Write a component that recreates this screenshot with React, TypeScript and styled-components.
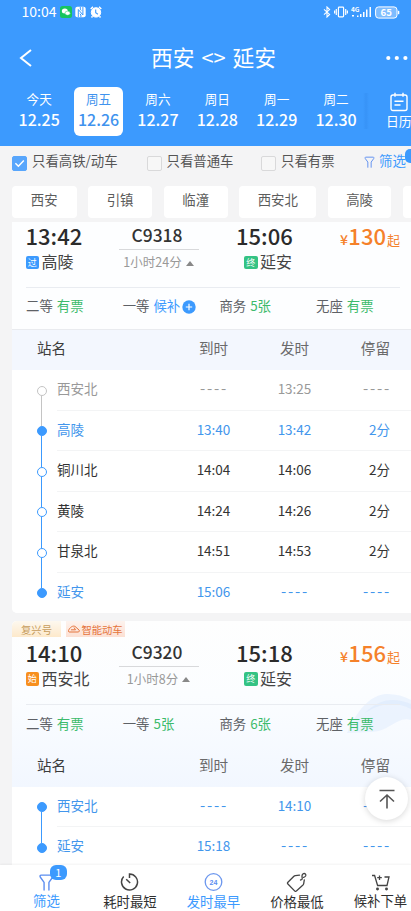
import React from 'react';
import styled, { createGlobalStyle, css } from 'styled-components';

const BLUE = '#3c9afe';
const GREEN = '#3dbb6c';

const Global = createGlobalStyle`
  * { box-sizing: border-box; }
  body { margin: 0; font-family: "Noto Sans CJK SC", sans-serif; }
`;

const Screen = styled.div`
  width: 411px;
  height: 911px;
  overflow: hidden;
  display: flex;
  flex-direction: column;
  background: #f4f4f5;
  white-space: nowrap;
  color: #333;
`;

/* ---------- header ---------- */
const Header = styled.header`
  height: 146px;
  flex: none;
  background: ${BLUE};
  color: #fff;
`;
const StatusBar = styled.div`
  height: 24px;
  padding: 0 11px 0 21.5px;
  display: flex;
  align-items: center;
  gap: 3.5px;
`;
const Clock = styled.span`
  font-size: 14px;
  line-height: 22px;
  margin-top: -2px;
`;
const StatusRight = styled.div`
  margin-left: auto;
  display: flex;
  align-items: center;
  gap: 3px;
`;
const TitleBar = styled.div`
  height: 62px;
  padding: 5px 3px 0 19px;
  display: flex;
  align-items: center;
  justify-content: space-between;
`;
const Title = styled.h1`
  margin: -2px 0 0;
  font-size: 21.8px;
  font-weight: 400;
  line-height: 32px;
  padding-left: 8px;
  word-spacing: 2px;
`;
const DateStrip = styled.div`
  display: flex;
  height: 50px;
  padding: 1px 0 0 9.5px;
`;
const DayCell = styled.div<{ $on?: boolean }>`
  width: 48.6px;
  margin: 0 5.4px;
  height: 49px;
  border-radius: 6px;
  text-align: center;
  flex: none;
  ${p => p.$on && css`background: #fff; color: #3f93ee;`}
`;
const DayName = styled.div`
  font-size: 12.6px;
  line-height: 18px;
  padding-top: 3px;
`;
const DayDate = styled.div`
  font-size: 16px;
  font-weight: 500;
  line-height: 20px;
  margin: 1px -4px 0;
`;
const StripEdge = styled.div`
  width: 6px;
  height: 36px;
  margin: 6px 16px 0 -3px;
  flex: none;
  background: linear-gradient(90deg, rgba(30, 110, 210, 0), rgba(30, 110, 210, 0.16), rgba(30, 110, 210, 0));
`;
const Calendar = styled.div`
  width: 28px;
  flex: none;
  display: flex;
  flex-direction: column;
  align-items: center;
  padding-top: 5px;
  font-size: 12.8px;
  line-height: 17px;
`;

/* ---------- filters ---------- */
const FilterRow = styled.div`
  display: flex;
  height: 40px;
  flex: none;
  padding: 4px 0 0 12px;
  font-size: 13.4px;
  line-height: 20px;
  color: #555;
`;
const Check = styled.label<{ $w: number }>`
  display: flex;
  width: ${p => p.$w}px;
  gap: 5px;
  flex: none;
`;
const Box = styled.span<{ $on?: boolean }>`
  width: 15px;
  height: 15px;
  margin-top: 6px;
  border-radius: 2px;
  display: flex;
  border: 1px solid ${p => (p.$on ? '#58a6fc' : '#d9d9da')};
  background: ${p => (p.$on ? '#58a6fc' : '#f7f7f7')};
`;
const FilterLink = styled.div`
  display: flex;
  color: ${BLUE};
  gap: 3px;
  padding-left: 1px;
  flex: none;
  & > svg { margin-top: 5px; }
`;
const CornerBadge = styled.span`
  width: 16px;
  height: 14px;
  margin: -1px 0 0 -4px;
  border-radius: 5px;
  background: ${BLUE};
`;
const ChipRow = styled.div`
  display: flex;
  height: 36px;
  flex: none;
  padding-left: 12px;
  gap: 11.6px;
`;
const Chip = styled.div<{ $w: number }>`
  width: ${p => p.$w}px;
  height: 32px;
  flex: none;
  border-radius: 4px;
  background: #fff;
  color: #5c5c5c;
  font-size: 13.4px;
  line-height: 26px;
  text-align: center;
`;

/* ---------- train cards ---------- */
const Card = styled.section<{ $tagged?: boolean }>`
  margin: 0 0 8px 12px;
  flex: none;
  background: ${p => (p.$tagged ? '#fff' : '#fdfeff')};
  border-radius: ${p => (p.$tagged ? '5px 0 0 0' : '0 0 0 5px')};
  overflow: hidden;
`;
const CardTop = styled.div<{ $tagged?: boolean }>`
  position: relative;
  isolation: isolate;
  ${p => p.$tagged
    ? css`background: linear-gradient(180deg, #fefefe 0%, #fbfdff 45%, #f2f7ff 100%);`
    : css`border-bottom: 1px solid #e9ebef; height: 108px;`}
`;
const Tags = styled.div`
  display: flex;
  height: 16px;
  gap: 5px;
  font-size: 10.3px;
  line-height: 15px;
`;
const Tag = styled.span<{ $kind: 'gold' | 'red' }>`
  display: flex;
  justify-content: center;
  align-items: center;
  gap: 1px;
  height: 16px;
  width: ${p => (p.$kind === 'gold' ? 49 : 59)}px;
  color: ${p => (p.$kind === 'gold' ? '#c69c5c' : '#e5743c')};
  background: ${p => (p.$kind === 'gold'
    ? 'linear-gradient(180deg, #fdf8ef, #fde9cb)'
    : 'linear-gradient(180deg, #fdf3ee, #fce0d3)')};
`;
const Summary = styled.div<{ $tagged?: boolean }>`
  display: grid;
  grid-template-columns: 80px 107px 99px 1fr;
  height: ${p => (p.$tagged ? 67.5 : 66)}px;
  padding-top: ${p => (p.$tagged ? 1.5 : 0)}px;
  margin: 0 11px 0 13.5px;
  border-bottom: 1px solid #e9ecf1;
`;
const Col = styled.div<{ $x?: number }>`
  padding-left: ${p => p.$x || 0}px;
`;
const BigTime = styled.div`
  height: 28px;
  font-size: 22px;
  font-weight: 500;
  line-height: 26px;
  color: #2b2b2b;
`;
const Station = styled.div<{ $shift?: number }>`
  display: flex;
  align-items: center;
  gap: 2.5px;
  height: 23px;
  margin-left: ${p => p.$shift || 0}px;
  font-size: 16px;
  line-height: 23px;
  color: #444;
`;
const StopBadge = styled.span<{ $bg: string }>`
  width: 13.5px;
  height: 13.5px;
  margin-top: 2px;
  border-radius: 2px;
  background: ${p => p.$bg};
  color: #fff;
  font-size: 9px;
  line-height: 13px;
  text-align: center;
`;
const TrainCol = styled.div`
  width: 80px;
  margin-left: 13px;
  text-align: center;
`;
const TrainNo = styled.div`
  height: 28px;
  border-bottom: 1px solid #d8d9db;
  font-size: 17.4px;
  font-weight: 500;
  line-height: 25px;
  padding-right: 3px;
  color: #333;
`;
const Duration = styled.div`
  display: flex;
  justify-content: center;
  align-items: center;
  gap: 4px;
  font-size: 12.5px;
  line-height: 24px;
  color: #999;
`;
const Triangle = styled.i`
  border: 4px solid transparent;
  border-top: 0;
  border-bottom: 5px solid #888;
  margin-top: 2px;
`;
const Price = styled.div`
  display: flex;
  justify-content: flex-end;
  align-items: baseline;
  color: #f5812a;
  font-size: 22px;
  font-weight: 500;
  line-height: 26px;
  height: 28px;
  small { font-size: 14px; margin-right: 0.5px; }
  em { font-size: 13px; font-style: normal; font-weight: 400; margin-left: 1px; }
`;
const Seats = styled.div<{ $tagged?: boolean }>`
  display: grid;
  grid-template-columns: repeat(4, 96.7px);
  height: ${p => (p.$tagged ? 42 : 41)}px;
  padding-left: 14px;
  font-size: 13.4px;
  line-height: ${p => (p.$tagged ? 36 : 35)}px;
  align-items: start;
  color: #5e6166;
`;
const Seat = styled.div<{ $c: string }>`
  display: flex;
  align-items: center;
  b { font-weight: 400; margin-left: 4px; color: ${p => p.$c}; }
`;
const Plus = styled.svg`
  margin: 3px 0 0 2px;
`;
const TableHead = styled.div<{ $plain?: boolean }>`
  display: grid;
  grid-template-columns: 161px 81px 81px 55px;
  height: 40px;
  background: ${p => (p.$plain ? 'transparent' : '#f3f7fe')};
  color: #6a6a6a;
  font-size: 14.6px;
  line-height: 36px;
  text-align: center;
  & > :first-child { text-align: left; padding-left: 25px; color: #3c3c3c; }
  & > :last-child { text-align: right; }
`;
type Tone = 'gray' | 'blue' | 'dark';
const tones: Record<Tone, string> = { gray: '#999', blue: '#4296ec', dark: '#333' };
const StopRow = styled.div<{ $tone: Tone }>`
  display: grid;
  grid-template-columns: 45px 1fr;
  height: 40.5px;
  background: #fff;
  color: ${p => tones[p.$tone]};
  font-size: 13.5px;
  line-height: 36px;
`;
const StopCells = styled.div<{ $last?: boolean }>`
  display: grid;
  grid-template-columns: 116px 81px 81px 55px;
  border-bottom: 1px solid ${p => (p.$last ? 'transparent' : '#f3f4f5')};
  text-align: center;
  & > :first-child { text-align: left; }
  & > :last-child { text-align: right; }
`;
const Dashes = styled.span`
  font-size: 15px;
  letter-spacing: 1.8px;
  margin-right: -1px;
`;
const Rail = styled.div`
  display: flex;
  flex-direction: column;
  align-items: center;
  width: 59px;
`;
const RailLine = styled.i<{ $h?: number; $c: string }>`
  width: 1.3px;
  background: ${p => p.$c};
  ${p => (p.$h ? css`height: ${p.$h}px;` : css`flex: 1;`)}
`;
const Dot = styled.i<{ $c: string; $fill?: boolean }>`
  width: 10px;
  height: 10px;
  flex: none;
  border-radius: 50%;
  border: 1.4px solid ${p => p.$c};
  background: ${p => (p.$fill ? p.$c : '#fff')};
`;
const Watermark = styled.svg`
  position: absolute;
  right: 0;
  top: 68px;
  z-index: -1;
`;

/* ---------- bottom ---------- */
const Results = styled.main`
  flex: 1;
  min-height: 0;
  overflow: hidden;
`;
const ToTop = styled.button`
  position: absolute;
  left: 365px;
  top: 777px;
  width: 43px;
  height: 43px;
  padding: 0;
  border: 0;
  border-radius: 50%;
  background: #fff;
  box-shadow: 0 1px 6px rgba(0, 0, 0, 0.16);
  display: flex;
  align-items: center;
  justify-content: center;
`;
const TabBar = styled.nav`
  height: 46px;
  flex: none;
  display: flex;
  padding-left: 4.7px;
  background: #fff;
  box-shadow: 0 -1px 2px rgba(0, 0, 0, 0.05);
`;
const Tab = styled.div<{ $on?: boolean; $up?: number }>`
  position: relative;
  flex: none;
  width: 83.5px;
  height: 46px;
  padding-top: 7px;
  display: flex;
  flex-direction: column;
  align-items: center;
  font-size: 13.4px;
  color: ${p => (p.$on ? BLUE : '#2f2f2f')};
  & > svg { flex: none; }
  & > span { line-height: 18px; margin-top: ${p => -(p.$up || 0)}px; }
`;
const Count = styled.b`
  position: absolute;
  left: 45px;
  top: 0;
  width: 17px;
  height: 15px;
  border-radius: 6px;
  background: ${BLUE};
  color: #fff;
  font-size: 11px;
  font-weight: 400;
  line-height: 14px;
  text-align: center;
`;

const Funnel = ({ s }: { s: number }) => (
  <svg width={s} height={s} viewBox="0 0 18 18" fill="none" stroke="#5b8df0" strokeWidth="1.3" strokeLinecap="round" strokeLinejoin="round">
    <path d="M6.700 17V9.800L3.200 5C2.500 3.900 2.800 3 4 3h10c1.200 0 1.500.9.8 2l-3.500 4.800V17" />
  </svg>
);

const days = [['今天', '12.25'], ['周五', '12.26'], ['周六', '12.27'], ['周日', '12.28'], ['周一', '12.29'], ['周二', '12.30']];
const chips: [string, number][] = [['西安', 64.5], ['引镇', 64], ['临潼', 64], ['西安北', 77], ['高陵', 63.5], ['', 64]];

interface Stop { name: string; arr: string; dep: string; stay: string; tone: Tone; fill?: boolean }
interface Train {
  dep: string; arr: string; no: string; dur: string; price: string;
  from: [string, string, string]; to: string;
  seats: [string, string, boolean?][]; stops: Stop[]; tagged?: boolean;
}
const NONE = '----';
const trains: Train[] = [
  {
    dep: '13:42', arr: '15:06', no: 'C9318', dur: '1小时24分', price: '130',
    from: ['过', BLUE, '高陵'], to: '延安',
    seats: [['二等', '有票'], ['一等', '候补', true], ['商务', '5张'], ['无座', '有票']],
    stops: [
      { name: '西安北', arr: NONE, dep: '13:25', stay: NONE, tone: 'gray' },
      { name: '高陵', arr: '13:40', dep: '13:42', stay: '2分', tone: 'blue', fill: true },
      { name: '铜川北', arr: '14:04', dep: '14:06', stay: '2分', tone: 'dark' },
      { name: '黄陵', arr: '14:24', dep: '14:26', stay: '2分', tone: 'dark' },
      { name: '甘泉北', arr: '14:51', dep: '14:53', stay: '2分', tone: 'dark' },
      { name: '延安', arr: '15:06', dep: NONE, stay: NONE, tone: 'blue', fill: true },
    ],
  },
  {
    dep: '14:10', arr: '15:18', no: 'C9320', dur: '1小时8分', price: '156', tagged: true,
    from: ['始', '#f78f1e', '西安北'], to: '延安',
    seats: [['二等', '有票'], ['一等', '5张'], ['商务', '6张'], ['无座', '有票']],
    stops: [
      { name: '西安北', arr: NONE, dep: '14:10', stay: NONE, tone: 'blue', fill: true },
      { name: '延安', arr: '15:18', dep: NONE, stay: NONE, tone: 'blue', fill: true },
    ],
  },
];

const Value = ({ v }: { v: string }) => (v === NONE ? <Dashes>{v}</Dashes> : <span>{v}</span>);
const railColor = (s: Stop) => (s.tone === 'gray' ? '#c4c4c4' : BLUE);

function TableHeader({ plain }: { plain?: boolean }) {
  return (
    <TableHead $plain={plain}><span>站名</span><span>到时</span><span>发时</span><span>停留</span></TableHead>
  );
}

function TrainCard({ t }: { t: Train }) {
  return (
    <Card $tagged={t.tagged}>
      <CardTop $tagged={t.tagged}>
        {t.tagged && (
          <>
            <Watermark width="66" height="48" viewBox="0 0 66 48">
              <path d="M2 44C12 22 24 6 42 5c9 0 17 2 24 6v20c-14-4-22 12-40 12Z" fill="#e6f0fd" opacity=".7" />
              <path d="M20 24C34 10 48 8 66 15v5C50 12 36 14 20 24Z" fill="#dceafc" opacity=".6" />
            </Watermark>
            <Tags>
              <Tag $kind="gold">复兴号</Tag>
              <Tag $kind="red">
                <svg width="12" height="8" viewBox="0 0 12 8" fill="none" stroke="#e5743c" strokeWidth="1">
                  <path d="M.5 5.500C2 2 5 .4 7 1.400L11 5c.8.9.3 2-1 2H1C.4 7 .3 6.200.5 5.500ZM3 4.800h4.500L6 2.500" />
                </svg>
                智能动车
              </Tag>
            </Tags>
          </>
        )}
        <Summary $tagged={t.tagged}>
          <Col>
            <BigTime>{t.dep}</BigTime>
            <Station><StopBadge $bg={t.from[1]}>{t.from[0]}</StopBadge>{t.from[2]}</Station>
          </Col>
          <TrainCol>
            <TrainNo>{t.no}</TrainNo>
            <Duration>{t.dur}<Triangle /></Duration>
          </TrainCol>
          <Col $x={23.5}>
            <BigTime>{t.arr}</BigTime>
            <Station $shift={8}><StopBadge $bg="#34c384">终</StopBadge>{t.to}</Station>
          </Col>
          <Price><small>¥</small>{t.price}<em>起</em></Price>
        </Summary>
        <Seats $tagged={t.tagged}>
          {t.seats.map(([k, v, wait]) => (
            <Seat key={k} $c={wait ? BLUE : GREEN}>
              {k}<b>{v}</b>
              {wait && (
                <Plus width="14" height="14" viewBox="0 0 14 14">
                  <circle cx="7" cy="7" r="6.7" fill={BLUE} />
                  <path d="M7 3.800v6.400M3.800 7h6.400" stroke="#fff" strokeWidth="1.2" />
                </Plus>
              )}
            </Seat>
          ))}
        </Seats>
        {t.tagged && <TableHeader plain />}
      </CardTop>
      {!t.tagged && <TableHeader />}
      {t.stops.map((s, i) => {
        const last = i === t.stops.length - 1;
        return (
          <StopRow key={s.name} $tone={s.tone}>
            <Rail>
              <RailLine $h={15.5} $c={i ? railColor(t.stops[i - 1]) : 'transparent'} />
              <Dot $c={railColor(s)} $fill={s.fill} />
              <RailLine $c={last ? 'transparent' : railColor(s)} />
            </Rail>
            <StopCells $last={last}>
              <span>{s.name}</span><Value v={s.arr} /><Value v={s.dep} /><Value v={s.stay} />
            </StopCells>
          </StopRow>
        );
      })}
    </Card>
  );
}

export default function App() {
  return (
    <>
      <Global />
      <Screen>
        <Header>
          <StatusBar>
            <Clock>10:04</Clock>
            <svg width="12" height="12" viewBox="0 0 12 12">
              <rect width="12" height="12" rx="2.5" fill="#16c45f" />
              <ellipse cx="4.8" cy="4.9" rx="3" ry="2.5" fill="#fff" />
              <ellipse cx="7.6" cy="7.2" rx="2.6" ry="2.1" fill="#fff" stroke="#16c45f" strokeWidth=".5" />
            </svg>
            <svg width="11" height="12" viewBox="0 0 11 12">
              <rect x=".3" y=".8" width="10.4" height="10.4" rx="2" fill="#fff" />
              <path d="M3.300 11V3.500l4.600 5.500V1M5.300 1v2.200l1 1.300M5.900 11V9l-1-1.300" stroke={BLUE} strokeWidth="1" fill="none" />
            </svg>
            <svg width="12" height="12" viewBox="0 0 12 12" fill="none" stroke="#fff">
              <circle cx="6" cy="6.4" r="4.7" fill="#fff" />
              <path d="M.7 3 3 .9M11.3 3 9 .9M2.500 10.200l-1 1.200M9.500 10.200l1 1.200" strokeWidth="1.5" />
              <path d="M5.700 3.600v3l2.200 1.600" stroke={BLUE} strokeWidth="1.1" />
            </svg>
            <StatusRight>
              <svg width="8" height="12" viewBox="0 0 8 12" fill="none" stroke="#fff" strokeWidth="1.1">
                <path d="M1 3.300 6.600 8.400 4 11V1l2.600 2.600L1 8.700" />
              </svg>
              <svg width="14" height="12" viewBox="0 0 14 12" fill="none" stroke="#fff" strokeWidth="1.2">
                <rect x="4.4" y="1.2" width="5.2" height="9.6" rx=".8" />
                <path d="M2.300 3v6M11.700 3v6M.6 4.500v3M13.400 4.500v3" />
              </svg>
              <svg width="21" height="14" viewBox="0 0 21 14" fill="#fff" overflow="visible">
                <text x="0" y="7" fontSize="6.5" fontWeight="700" fontFamily="Noto Sans CJK SC, sans-serif">4G</text>
                <path d="M1 10h2v1.500H1zM6 10.500h1.500v1.500H6zM9 9h1.500v3H9zM12 7h1.500v5H12zM15 4.500h1.500V12H15zM18.500 2H20v10h-1.500z" />
              </svg>
              <svg width="25" height="13" viewBox="0 0 25 13" overflow="visible">
                <rect x=".6" y=".9" width="21.4" height="11.2" rx="3" fill="#7dbcff" stroke="#fff" strokeWidth="1" />
                <path d="M23.600 4.800v3.400" stroke="#fff" strokeWidth="1.4" />
                <text x="11.2" y="10.1" fontSize="9.6" fontWeight="700" fill="#fff" textAnchor="middle" fontFamily="Noto Sans CJK SC, sans-serif">65</text>
              </svg>
            </StatusRight>
          </StatusBar>
          <TitleBar>
            <svg width="14" height="20" viewBox="0 0 14 20" fill="none" stroke="#fff" strokeWidth="2">
              <path d="M12 2 2 10l10 8" />
            </svg>
            <Title>西安 &lt;&gt; 延安</Title>
            <svg width="22" height="6" viewBox="0 0 22 6" fill="#fff">
              <circle cx="2.3" cy="3" r="2.1" /><circle cx="10.8" cy="3" r="2.1" /><circle cx="19.4" cy="3" r="2.1" />
            </svg>
          </TitleBar>
          <DateStrip>
            {days.map(([n, d]) => (
              <DayCell key={d} $on={d === '12.26'}>
                <DayName>{n}</DayName>
                <DayDate>{d}</DayDate>
              </DayCell>
            ))}
            <StripEdge />
            <Calendar>
              <svg width="18" height="20" viewBox="0 0 18 20" fill="none" stroke="#fff" strokeWidth="1.4">
                <rect x="1" y="3" width="16" height="15.5" rx="2" />
                <path d="M5 .8v4M13 .8v4M4.500 9.200h9M4.500 13h6" />
              </svg>
              日历
            </Calendar>
          </DateStrip>
        </Header>

        <FilterRow>
          <Check $w={134.5}>
            <Box $on>
              <svg width="13" height="13" viewBox="0 0 13 13" fill="none" stroke="#fff" strokeWidth="1.5"><path d="m2.400 6.200 3 3 5.400-5.600" /></svg>
            </Box>
            只看高铁/动车
          </Check>
          <Check $w={114.5}><Box />只看普通车</Check>
          <Check $w={101}><Box />只看有票</Check>
          <FilterLink><Funnel s={13} />筛选<CornerBadge /></FilterLink>
        </FilterRow>
        <ChipRow>
          {chips.map(([c, w], i) => <Chip key={i} $w={w}>{c}</Chip>)}
        </ChipRow>

        <Results>
          {trains.map(t => <TrainCard key={t.no} t={t} />)}
        </Results>

        <ToTop aria-label="top">
          <svg width="18" height="20" viewBox="0 0 18 20" fill="none" stroke="#555" strokeWidth="1.6">
            <path d="M1.500 1.500h15M9 19.500V6M2 12.500 9 6l7 6.500" />
          </svg>
        </ToTop>

        <TabBar>
          <Tab $on $up={0}>
            <Funnel s={19} />
            <span>筛选</span>
            <Count>1</Count>
          </Tab>
          <Tab>
            <svg width="19" height="20" viewBox="0 0 19 20" fill="none" stroke="#444" strokeWidth="1.5">
              <path d="M9.500 6V2a8 8 0 1 1-5.800 2.500" />
              <path d="m6.200 7.200 4 3.800" />
            </svg>
            <span>耗时最短</span>
          </Tab>
          <Tab $on>
            <svg width="19" height="20" viewBox="0 0 19 20" fill="none" stroke="#6c97ee" strokeWidth="1.3">
              <circle cx="9.5" cy="10" r="8.3" />
              <text x="9.5" y="12.6" fontSize="7" fontWeight="700" fill="#5b8df0" stroke="none" textAnchor="middle" fontFamily="Liberation Sans, sans-serif">24</text>
            </svg>
            <span>发时最早</span>
          </Tab>
          <Tab>
            <svg width="21" height="20" viewBox="0 0 21 20" fill="none" stroke="#444" strokeWidth="1.3" strokeLinejoin="round" strokeLinecap="round">
              <path d="M13.500 3.200 9.300 3.600c-.7.1-1 .3-1.400.7L1.900 10.200c-.6.6-.6 1.200 0 1.800l6.700 6.900c.6.6 1.200.6 1.800 0l6.300-5.600c.6-.6.9-1 1-1.700l.6-3.800" />
              <path d="M14.500 8c1.400 0 1.900-.8 1.700-2-.3-1.500-.6-3.800 1.300-4.400 1.700-.5 2.900 1 2.100 2.400-.5.8-1.300 1.200-2 1.300" />
            </svg>
            <span>价格最低</span>
          </Tab>
          <Tab $up={1.5}>
            <svg width="19" height="20" viewBox="0 0 19 20" fill="none" stroke="#444" strokeWidth="1.3">
              <path d="M1 3.500h2.600l3 10h9.400l2-8.500h-4.500M8.500 3.500v4.500M6.200 5.700h4.600" />
              <circle cx="6.5" cy="17" r=".8" fill="#444" /><circle cx="15.5" cy="17" r=".8" fill="#444" />
            </svg>
            <span>候补下单</span>
          </Tab>
        </TabBar>
      </Screen>
    </>
  );
}
